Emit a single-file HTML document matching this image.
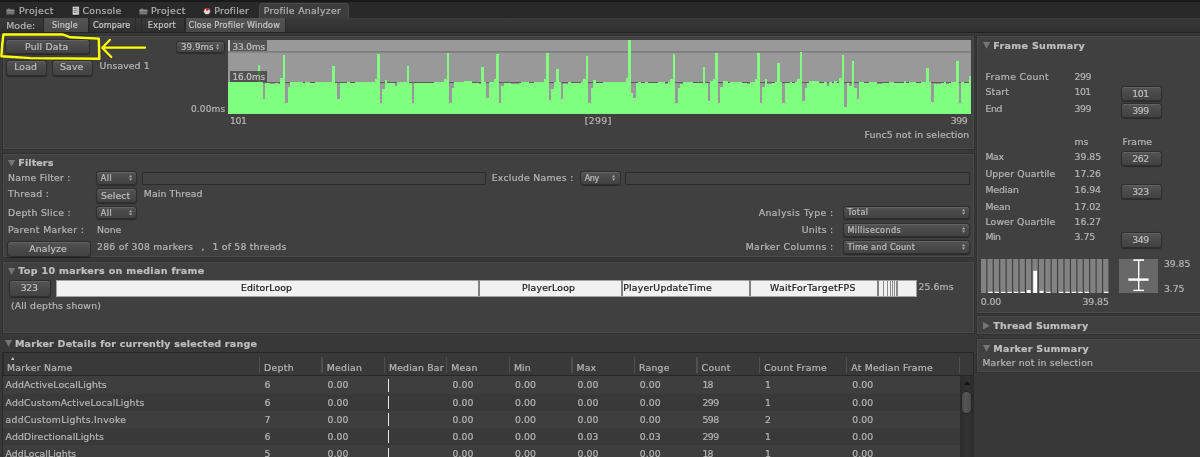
<!DOCTYPE html>
<html lang="en"><head><meta charset="utf-8"><title>Profile Analyzer</title><style>
html,body{margin:0;padding:0}
body{width:1200px;height:457px;overflow:hidden;background:#383838;position:relative;font-family:"DejaVu Sans","Liberation Sans",sans-serif;font-size:9.3px;color:#b4b4b4}
.abs{position:absolute;display:block}
.t{filter:grayscale(1);-webkit-text-stroke:0.22px;white-space:nowrap;line-height:12px;height:12px;color:#b4b4b4}
.t.b{font-weight:bold;color:#bebebe}
.t.tab{color:#b0b0b0}
.t.bt{color:#bdbdbd}
.box{background:#404040;border:1px solid #4a4a4a;box-sizing:border-box;box-shadow:0 0 0 0.7px #2f2f2f}
.tf{background:#434343;border:1px solid #2b2b2b;box-sizing:border-box;border-radius:1px}
.btn{box-sizing:border-box;border:1px solid #2e2e2e;border-radius:3.2px;background:linear-gradient(#545454,#4a4a4a 45%,#424242);box-shadow:inset 0 1px 0 #626262,0 0.6px 0.8px rgba(0,0,0,.35)}
.tb{box-sizing:border-box;border-left:1px solid #2a2a2a;border-right:1px solid #2a2a2a;background:linear-gradient(#3a3a3a,#2f2f2f)}
.tb.on{background:linear-gradient(#535353,#494949)}
.gl{background:rgba(38,38,38,0.62)}
.seg{box-sizing:border-box;background:#f1f1f1;border:1px solid #b4b4b4;border-top-color:#fafafa}
</style></head><body>
<div class="abs" style="left:0;top:0;width:1200px;height:18px;background:#292929"></div>
<div class="abs" style="left:0;top:0;width:1200px;height:1.6px;background:#191919"></div>
<div class="abs" style="left:259px;top:3.4px;width:90px;height:15px;background:#3d3d3d;border-radius:3.5px 3.5px 0 0;border:1px solid #4a4a4a;border-bottom:none;box-sizing:border-box"></div>
<svg class="abs" style="left:6.30px;top:7.90px" width="9" height="7" viewBox="0 0 9 7"><path d="M0.4 1.5H1.3L1.9 0.5H4L4.6 1.5H8.4V6.5H0.4Z" fill="#747474"/><path d="M0.4 2.4H8.4" stroke="#989898" stroke-width="0.9"/></svg>
<div class="abs t tab" style="top:5px;font-size:9.3px;letter-spacing:0.431px;left:19.00px;">Project</div>
<svg class="abs" style="left:71.5px;top:6.4px" width="8" height="10" viewBox="0 0 8 10"><rect x="0.3" y="0.3" width="7" height="8.8" rx="0.8" fill="#dedede" stroke="#111" stroke-width="0.6"/><path d="M1.6 2.3H4.6M1.6 4.3H4.6M1.6 6.3H4.6" stroke="#555" stroke-width="0.9"/><path d="M5.4 1.4V7.8" stroke="#999" stroke-width="0.7"/></svg>
<div class="abs t tab" style="top:5px;font-size:9.3px;letter-spacing:0.285px;left:82.60px;">Console</div>
<svg class="abs" style="left:138.90px;top:7.90px" width="9" height="7" viewBox="0 0 9 7"><path d="M0.4 1.5H1.3L1.9 0.5H4L4.6 1.5H8.4V6.5H0.4Z" fill="#747474"/><path d="M0.4 2.4H8.4" stroke="#989898" stroke-width="0.9"/></svg>
<div class="abs t tab" style="top:5px;font-size:9.3px;letter-spacing:0.431px;left:151.00px;">Project</div>
<svg class="abs" style="left:202.5px;top:7.2px" width="8" height="8" viewBox="0 0 8 8"><circle cx="4" cy="4.3" r="3.4" fill="#dcdcdc" stroke="#3a1010" stroke-width="0.6"/><path d="M4 4.3L2.3 1.5A3.3 3.3 0 0 1 6.4 2Z" fill="#e01818"/></svg>
<div class="abs t tab" style="top:5px;font-size:9.3px;letter-spacing:0.264px;left:214.30px;">Profiler</div>
<div class="abs t tab" style="top:5px;font-size:9.3px;letter-spacing:0.311px;left:263.80px;">Profile Analyzer</div>
<div class="abs" style="left:0;top:18px;width:1200px;height:14px;background:linear-gradient(#3a3a3a,#2f2f2f)"></div>
<div class="abs" style="left:0;top:32px;width:1200px;height:1.2px;background:#232323"></div>
<div class="abs t" style="top:20px;font-size:9.3px;letter-spacing:0.137px;left:6.20px;">Mode:</div>
<div class="abs tb on" style="left:42.50px;top:18px;width:46.80px;height:14px"></div>
<div class="abs t bt" style="left:41.50px;width:46.80px;top:19px;font-size:8.1px;letter-spacing:0.182px;text-indent:0.182px;text-align:center;color:#c6c6c6">Single</div>
<div class="abs tb" style="left:89.30px;top:18px;width:46.70px;height:14px"></div>
<div class="abs t bt" style="left:88.30px;width:46.70px;top:19px;font-size:8.1px;letter-spacing:0.094px;text-indent:0.094px;text-align:center;color:#c6c6c6">Compare</div>
<div class="abs tb" style="left:141.00px;top:18px;width:43.50px;height:14px"></div>
<div class="abs t bt" style="left:140.00px;width:43.50px;top:19px;font-size:8.1px;letter-spacing:0.300px;text-indent:0.300px;text-align:center;color:#c6c6c6">Export</div>
<div class="abs tb on" style="left:184.80px;top:18px;width:100.90px;height:14px"></div>
<div class="abs t bt" style="left:183.80px;width:100.90px;top:19px;font-size:8.1px;letter-spacing:0.183px;text-indent:0.183px;text-align:center;color:#c6c6c6">Close Profiler Window</div>
<div class="abs box" style="left:2.60px;top:35.80px;width:971.60px;height:113.40px"></div>
<div class="abs box" style="left:2.60px;top:153.60px;width:971.60px;height:103.80px"></div>
<div class="abs box" style="left:2.60px;top:261.60px;width:971.60px;height:71.60px"></div>
<div class="abs box" style="left:977.40px;top:36.20px;width:225.60px;height:276.70px"></div>
<div class="abs box" style="left:977.40px;top:316.40px;width:225.60px;height:18.00px"></div>
<div class="abs box" style="left:977.40px;top:338.80px;width:225.60px;height:33.60px"></div>
<div class="abs btn" style="left:5.40px;top:39.10px;width:84.50px;height:15.30px"></div>
<div class="abs t bt" style="left:4.40px;width:84.50px;top:41px;font-size:9.3px;letter-spacing:0.205px;text-indent:0.205px;text-align:center">Pull Data</div>
<div class="abs btn" style="left:5.60px;top:59.90px;width:41.90px;height:15.90px"></div>
<div class="abs t bt" style="left:4.60px;width:41.90px;top:61px;font-size:9.3px;letter-spacing:0.096px;text-indent:0.096px;text-align:center">Load</div>
<div class="abs btn" style="left:51.80px;top:59.90px;width:41.70px;height:15.90px"></div>
<div class="abs t bt" style="left:50.80px;width:41.70px;top:61px;font-size:9.3px;letter-spacing:0.191px;text-indent:0.191px;text-align:center">Save</div>
<div class="abs t" style="top:60px;font-size:9.3px;letter-spacing:0.094px;left:99.60px;">Unsaved 1</div>
<div class="abs btn" style="left:176.10px;top:40.60px;width:48.90px;height:12.80px"><svg class="abs" style="right:4.40px;top:2.20px" width="3.2" height="5.8" viewBox="0 0 3.4 6.2"><path d="M0 2.4L1.7 0L3.4 2.4ZM0 3.8L1.7 6.2L3.4 3.8Z" fill="#acacac"/></svg></div>
<div class="abs t bt" style="left:181.00px;top:41px;font-size:8.6px;letter-spacing:0.080px">39.9ms</div>
<svg class="abs" style="left:228px;top:40px" width="743" height="74" viewBox="0 0 743 74"><rect width="743" height="74" fill="#999"/><rect y="11.4" width="743" height="1.1" fill="#707070"/><rect y="42.00" width="743" height="1.1" fill="#5d5d5d"/><g fill="#80ff80" shape-rendering="crispEdges"><rect x="0.00" y="41.90" width="29.87" height="32.10"/><rect x="29.82" y="25.00" width="2.53" height="49.00"/><rect x="32.30" y="41.90" width="2.53" height="32.10"/><rect x="34.79" y="58.70" width="2.53" height="15.30"/><rect x="37.27" y="43.00" width="5.02" height="31.00"/><rect x="42.24" y="43.80" width="5.02" height="30.20"/><rect x="47.21" y="43.00" width="2.53" height="31.00"/><rect x="49.70" y="43.80" width="2.53" height="30.20"/><rect x="52.18" y="38.00" width="2.53" height="36.00"/><rect x="54.67" y="14.90" width="2.53" height="59.10"/><rect x="57.15" y="62.50" width="2.53" height="11.50"/><rect x="59.64" y="47.00" width="2.53" height="27.00"/><rect x="62.12" y="41.90" width="12.47" height="32.10"/><rect x="74.55" y="43.00" width="2.53" height="31.00"/><rect x="77.03" y="41.90" width="5.02" height="32.10"/><rect x="82.00" y="43.00" width="5.02" height="31.00"/><rect x="86.97" y="41.90" width="17.44" height="32.10"/><rect x="104.37" y="26.00" width="2.53" height="48.00"/><rect x="106.85" y="43.00" width="2.53" height="31.00"/><rect x="109.34" y="58.70" width="2.53" height="15.30"/><rect x="111.82" y="43.00" width="7.50" height="31.00"/><rect x="119.28" y="41.90" width="2.53" height="32.10"/><rect x="121.76" y="43.00" width="5.02" height="31.00"/><rect x="126.73" y="41.90" width="19.93" height="32.10"/><rect x="146.61" y="39.00" width="2.53" height="35.00"/><rect x="149.10" y="14.00" width="2.53" height="60.00"/><rect x="151.58" y="62.50" width="2.53" height="11.50"/><rect x="154.07" y="49.00" width="2.53" height="25.00"/><rect x="156.55" y="39.80" width="2.53" height="34.20"/><rect x="159.04" y="43.00" width="7.50" height="31.00"/><rect x="166.49" y="46.00" width="2.53" height="28.00"/><rect x="168.98" y="41.90" width="9.99" height="32.10"/><rect x="178.92" y="26.00" width="2.53" height="48.00"/><rect x="181.40" y="43.00" width="2.53" height="31.00"/><rect x="183.89" y="62.50" width="2.53" height="11.50"/><rect x="186.37" y="43.00" width="19.93" height="31.00"/><rect x="206.25" y="41.90" width="9.99" height="32.10"/><rect x="216.19" y="39.00" width="2.53" height="35.00"/><rect x="218.68" y="13.20" width="2.53" height="60.80"/><rect x="221.16" y="62.50" width="2.53" height="11.50"/><rect x="223.65" y="48.00" width="2.53" height="26.00"/><rect x="226.13" y="41.90" width="9.99" height="32.10"/><rect x="236.07" y="41.00" width="7.50" height="33.00"/><rect x="243.53" y="43.00" width="7.50" height="31.00"/><rect x="250.98" y="43.80" width="2.53" height="30.20"/><rect x="253.46" y="27.20" width="2.53" height="46.80"/><rect x="255.95" y="41.90" width="2.53" height="32.10"/><rect x="258.43" y="57.60" width="2.53" height="16.40"/><rect x="260.92" y="41.90" width="5.02" height="32.10"/><rect x="265.89" y="39.00" width="2.53" height="35.00"/><rect x="268.37" y="14.00" width="2.53" height="60.00"/><rect x="270.86" y="63.40" width="2.53" height="10.60"/><rect x="273.34" y="46.00" width="2.53" height="28.00"/><rect x="275.83" y="43.00" width="7.50" height="31.00"/><rect x="283.28" y="43.80" width="7.50" height="30.20"/><rect x="290.74" y="43.00" width="2.53" height="31.00"/><rect x="293.22" y="41.90" width="7.50" height="32.10"/><rect x="300.68" y="43.00" width="5.02" height="31.00"/><rect x="305.65" y="41.90" width="9.99" height="32.10"/><rect x="315.59" y="39.00" width="2.53" height="35.00"/><rect x="318.07" y="13.20" width="2.53" height="60.80"/><rect x="320.56" y="59.90" width="2.53" height="14.10"/><rect x="323.04" y="49.40" width="2.53" height="24.60"/><rect x="325.53" y="41.90" width="2.53" height="32.10"/><rect x="328.01" y="28.70" width="2.53" height="45.30"/><rect x="330.50" y="41.90" width="2.53" height="32.10"/><rect x="332.98" y="58.70" width="2.53" height="15.30"/><rect x="335.47" y="43.80" width="5.02" height="30.20"/><rect x="340.44" y="41.90" width="2.53" height="32.10"/><rect x="342.92" y="43.00" width="9.99" height="31.00"/><rect x="352.86" y="41.90" width="2.53" height="32.10"/><rect x="355.35" y="39.00" width="2.53" height="35.00"/><rect x="357.83" y="15.80" width="2.53" height="58.20"/><rect x="360.32" y="63.40" width="2.53" height="10.60"/><rect x="362.80" y="48.00" width="2.53" height="26.00"/><rect x="365.29" y="39.80" width="2.53" height="34.20"/><rect x="367.77" y="43.00" width="7.50" height="31.00"/><rect x="375.23" y="41.90" width="22.41" height="32.10"/><rect x="397.59" y="38.00" width="2.53" height="36.00"/><rect x="400.08" y="0.20" width="2.53" height="73.80"/><rect x="402.56" y="53.00" width="2.53" height="21.00"/><rect x="405.05" y="57.60" width="2.53" height="16.40"/><rect x="407.53" y="43.00" width="2.53" height="31.00"/><rect x="410.02" y="41.90" width="2.53" height="32.10"/><rect x="412.50" y="43.00" width="5.02" height="31.00"/><rect x="417.47" y="41.90" width="2.53" height="32.10"/><rect x="419.96" y="43.00" width="9.99" height="31.00"/><rect x="429.90" y="41.90" width="7.50" height="32.10"/><rect x="437.35" y="43.80" width="2.53" height="30.20"/><rect x="439.84" y="41.90" width="2.53" height="32.10"/><rect x="442.32" y="39.40" width="2.53" height="34.60"/><rect x="444.81" y="14.00" width="2.53" height="60.00"/><rect x="447.29" y="62.50" width="2.53" height="11.50"/><rect x="449.78" y="48.00" width="2.53" height="26.00"/><rect x="452.26" y="43.80" width="2.53" height="30.20"/><rect x="454.75" y="41.90" width="9.99" height="32.10"/><rect x="464.69" y="43.00" width="9.99" height="31.00"/><rect x="474.63" y="27.20" width="2.53" height="46.80"/><rect x="477.11" y="43.00" width="2.53" height="31.00"/><rect x="479.60" y="60.80" width="2.53" height="13.20"/><rect x="482.08" y="41.00" width="2.53" height="33.00"/><rect x="484.57" y="39.00" width="2.53" height="35.00"/><rect x="487.05" y="13.20" width="2.53" height="60.80"/><rect x="489.54" y="62.50" width="2.53" height="11.50"/><rect x="492.02" y="47.00" width="2.53" height="27.00"/><rect x="494.51" y="41.00" width="5.02" height="33.00"/><rect x="499.47" y="43.00" width="2.53" height="31.00"/><rect x="501.96" y="41.90" width="12.47" height="32.10"/><rect x="514.38" y="43.00" width="5.02" height="31.00"/><rect x="519.35" y="43.80" width="2.53" height="30.20"/><rect x="521.84" y="41.90" width="5.02" height="32.10"/><rect x="526.81" y="39.40" width="2.53" height="34.60"/><rect x="529.29" y="13.20" width="2.53" height="60.80"/><rect x="531.78" y="62.50" width="2.53" height="11.50"/><rect x="534.26" y="47.00" width="2.53" height="27.00"/><rect x="536.75" y="39.00" width="2.53" height="35.00"/><rect x="539.23" y="43.80" width="5.02" height="30.20"/><rect x="544.20" y="43.00" width="2.53" height="31.00"/><rect x="546.69" y="41.90" width="2.53" height="32.10"/><rect x="549.17" y="23.10" width="2.53" height="50.90"/><rect x="551.66" y="41.90" width="2.53" height="32.10"/><rect x="554.14" y="62.50" width="2.53" height="11.50"/><rect x="556.63" y="43.00" width="5.02" height="31.00"/><rect x="561.60" y="41.90" width="2.53" height="32.10"/><rect x="564.08" y="43.00" width="2.53" height="31.00"/><rect x="566.57" y="41.90" width="2.53" height="32.10"/><rect x="569.05" y="39.00" width="2.53" height="35.00"/><rect x="571.54" y="12.30" width="2.53" height="61.70"/><rect x="574.02" y="60.80" width="2.53" height="13.20"/><rect x="576.51" y="47.50" width="2.53" height="26.50"/><rect x="578.99" y="43.00" width="2.53" height="31.00"/><rect x="581.48" y="40.50" width="2.53" height="33.50"/><rect x="583.96" y="41.00" width="7.50" height="33.00"/><rect x="591.42" y="43.00" width="5.02" height="31.00"/><rect x="596.39" y="41.90" width="2.53" height="32.10"/><rect x="598.87" y="46.30" width="2.53" height="27.70"/><rect x="601.36" y="41.90" width="2.53" height="32.10"/><rect x="603.84" y="43.00" width="2.53" height="31.00"/><rect x="606.33" y="41.00" width="2.53" height="33.00"/><rect x="608.81" y="43.00" width="2.53" height="31.00"/><rect x="611.30" y="38.00" width="2.53" height="36.00"/><rect x="613.78" y="14.90" width="2.53" height="59.10"/><rect x="616.27" y="66.60" width="2.53" height="7.40"/><rect x="618.75" y="43.00" width="2.53" height="31.00"/><rect x="621.24" y="46.30" width="2.53" height="27.70"/><rect x="623.72" y="21.00" width="2.53" height="53.00"/><rect x="626.21" y="48.00" width="2.53" height="26.00"/><rect x="628.69" y="59.00" width="2.53" height="15.00"/><rect x="631.18" y="41.90" width="5.02" height="32.10"/><rect x="636.15" y="43.00" width="5.02" height="31.00"/><rect x="641.12" y="41.90" width="7.50" height="32.10"/><rect x="648.57" y="43.80" width="5.02" height="30.20"/><rect x="653.54" y="43.00" width="7.50" height="31.00"/><rect x="661.00" y="41.90" width="5.02" height="32.10"/><rect x="665.97" y="43.00" width="9.99" height="31.00"/><rect x="675.91" y="41.00" width="2.53" height="33.00"/><rect x="678.39" y="43.00" width="2.53" height="31.00"/><rect x="680.88" y="41.90" width="7.50" height="32.10"/><rect x="688.33" y="43.00" width="5.02" height="31.00"/><rect x="693.30" y="41.90" width="5.02" height="32.10"/><rect x="698.27" y="27.90" width="2.53" height="46.10"/><rect x="700.76" y="41.90" width="2.53" height="32.10"/><rect x="703.24" y="61.70" width="2.53" height="12.30"/><rect x="705.73" y="43.80" width="7.50" height="30.20"/><rect x="713.18" y="43.00" width="2.53" height="31.00"/><rect x="715.67" y="41.90" width="2.53" height="32.10"/><rect x="718.15" y="43.80" width="2.53" height="30.20"/><rect x="720.64" y="43.00" width="2.53" height="31.00"/><rect x="723.12" y="41.90" width="5.02" height="32.10"/><rect x="728.09" y="21.00" width="2.53" height="53.00"/><rect x="730.58" y="63.40" width="2.53" height="10.60"/><rect x="733.06" y="41.90" width="2.53" height="32.10"/><rect x="735.55" y="43.00" width="5.02" height="31.00"/><rect x="740.52" y="36.30" width="2.53" height="37.70"/></g></svg>
<div class="abs" style="left:228px;top:40px;width:1.6px;height:11.4px;background:#c8c8c8"></div>
<div class="abs gl" style="left:230px;top:40px;width:36.7px;height:11.4px"></div>
<div class="abs gl" style="left:230px;top:71.3px;width:36.7px;height:10.6px"></div>
<div class="abs t" style="top:41px;font-size:8.8px;letter-spacing:-0.044px;left:232.50px;color:#c2c2c2">33.0ms</div>
<div class="abs t" style="top:71px;font-size:8.8px;letter-spacing:-0.044px;left:232.50px;color:#c2c2c2">16.0ms</div>
<div class="abs t" style="top:103px;font-size:9px;letter-spacing:0.146px;right:974.65px;">0.00ms</div>
<div class="abs t" style="top:115px;font-size:9.3px;letter-spacing:-0.383px;left:230.00px;">101</div>
<div class="abs t" style="top:115px;font-size:9.3px;letter-spacing:0.421px;left:548.00px;width:100.00px;text-align:center;text-indent:0.421px;">[299]</div>
<div class="abs t" style="top:115px;font-size:9.3px;letter-spacing:-0.483px;right:232.88px;">399</div>
<div class="abs t" style="top:129px;font-size:9.3px;letter-spacing:0.131px;right:230.67px;">Func5 not in selection</div>
<svg class="abs" style="left:0;top:28px" width="160" height="40" viewBox="0 28 160 40" fill="none" stroke="#ffff00" stroke-linejoin="round" stroke-linecap="round"><path stroke-width="2.4" d="M3.4 34.4L63 34.5L70.5 37.3L98.8 38.6L99.3 58.7L30.7 58.1L1.4 56.2L2.2 45Z"/><path stroke-width="2.2" d="M102.3 47.7H145M110 39.8L102.3 47.7L111.3 57"/></svg>
<svg class="abs" style="left:8.20px;top:159.70px" width="7.2" height="6.8" viewBox="0 0 7.2 6.8"><path d="M0 0H7.2L3.6 6.8Z" fill="#757575"/></svg>
<div class="abs t b" style="top:157px;font-size:9.5px;letter-spacing:0.115px;left:18.30px;">Filters</div>
<div class="abs t" style="top:172px;font-size:9.3px;letter-spacing:0.251px;left:8.00px;">Name Filter :</div>
<div class="abs btn" style="left:95.80px;top:171.40px;width:41.50px;height:13.20px"><svg class="abs" style="right:4.40px;top:2.40px" width="3.2" height="5.8" viewBox="0 0 3.4 6.2"><path d="M0 2.4L1.7 0L3.4 2.4ZM0 3.8L1.7 6.2L3.4 3.8Z" fill="#acacac"/></svg></div>
<div class="abs t bt" style="left:100.70px;top:172px;font-size:8.1px;letter-spacing:0.484px">All</div>
<div class="abs tf" style="left:141.50px;top:171.50px;width:344.50px;height:13.00px"></div>
<div class="abs t" style="top:172px;font-size:9.3px;letter-spacing:0.276px;left:491.70px;">Exclude Names :</div>
<div class="abs btn" style="left:579.80px;top:171.40px;width:41.20px;height:13.20px"><svg class="abs" style="right:4.40px;top:2.40px" width="3.2" height="5.8" viewBox="0 0 3.4 6.2"><path d="M0 2.4L1.7 0L3.4 2.4ZM0 3.8L1.7 6.2L3.4 3.8Z" fill="#acacac"/></svg></div>
<div class="abs t bt" style="left:584.70px;top:172px;font-size:8.1px;letter-spacing:-0.427px">Any</div>
<div class="abs tf" style="left:625.30px;top:171.50px;width:345.00px;height:13.00px"></div>
<div class="abs t" style="top:188px;font-size:9.3px;letter-spacing:0.315px;left:8.00px;">Thread :</div>
<div class="abs btn" style="left:95.80px;top:188.10px;width:41.50px;height:15.20px"></div>
<div class="abs t bt" style="left:94.80px;width:41.50px;top:190px;font-size:9.3px;letter-spacing:0.106px;text-indent:0.106px;text-align:center">Select</div>
<div class="abs t" style="top:188px;font-size:9.3px;letter-spacing:0.104px;left:143.80px;">Main Thread</div>
<div class="abs t" style="top:207px;font-size:9.3px;letter-spacing:0.272px;left:8.00px;">Depth Slice :</div>
<div class="abs btn" style="left:95.80px;top:206.30px;width:41.50px;height:13.10px"><svg class="abs" style="right:4.40px;top:2.35px" width="3.2" height="5.8" viewBox="0 0 3.4 6.2"><path d="M0 2.4L1.7 0L3.4 2.4ZM0 3.8L1.7 6.2L3.4 3.8Z" fill="#acacac"/></svg></div>
<div class="abs t bt" style="left:100.70px;top:207px;font-size:8.1px;letter-spacing:0.484px">All</div>
<div class="abs t" style="top:224px;font-size:9.3px;letter-spacing:0.346px;left:8.00px;">Parent Marker :</div>
<div class="abs t" style="top:224px;font-size:9.3px;letter-spacing:0.017px;left:97.00px;">None</div>
<div class="abs btn" style="left:6.80px;top:241.40px;width:84.50px;height:15.30px"></div>
<div class="abs t bt" style="left:5.80px;width:84.50px;top:243px;font-size:9.3px;letter-spacing:0.146px;text-indent:0.146px;text-align:center">Analyze</div>
<div class="abs t" style="top:241px;font-size:9.3px;letter-spacing:0.271px;left:97.00px;">286 of 308 markers</div>
<div class="abs t" style="top:241px;font-size:9.3px;letter-spacing:0.200px;left:201.40px;">,</div>
<div class="abs t" style="top:241px;font-size:9.3px;letter-spacing:0.207px;left:212.50px;">1 of 58 threads</div>
<div class="abs t" style="top:207px;font-size:9.3px;letter-spacing:0.409px;right:366.39px;">Analysis Type :</div>
<div class="abs t" style="top:224px;font-size:9.3px;letter-spacing:0.276px;right:366.52px;">Units :</div>
<div class="abs t" style="top:241px;font-size:9.3px;letter-spacing:0.392px;right:366.41px;">Marker Columns :</div>
<div class="abs btn" style="left:842.60px;top:205.80px;width:127.50px;height:13.60px"><svg class="abs" style="right:4.40px;top:2.60px" width="3.2" height="5.8" viewBox="0 0 3.4 6.2"><path d="M0 2.4L1.7 0L3.4 2.4ZM0 3.8L1.7 6.2L3.4 3.8Z" fill="#acacac"/></svg></div>
<div class="abs t bt" style="left:847.50px;top:206px;font-size:8.1px;letter-spacing:0.427px">Total</div>
<div class="abs btn" style="left:842.60px;top:223.30px;width:127.50px;height:13.40px"><svg class="abs" style="right:4.40px;top:2.50px" width="3.2" height="5.8" viewBox="0 0 3.4 6.2"><path d="M0 2.4L1.7 0L3.4 2.4ZM0 3.8L1.7 6.2L3.4 3.8Z" fill="#acacac"/></svg></div>
<div class="abs t bt" style="left:847.50px;top:224px;font-size:8.1px;letter-spacing:0.375px">Milliseconds</div>
<div class="abs btn" style="left:842.60px;top:240.40px;width:127.50px;height:13.40px"><svg class="abs" style="right:4.40px;top:2.50px" width="3.2" height="5.8" viewBox="0 0 3.4 6.2"><path d="M0 2.4L1.7 0L3.4 2.4ZM0 3.8L1.7 6.2L3.4 3.8Z" fill="#acacac"/></svg></div>
<div class="abs t bt" style="left:847.50px;top:241px;font-size:8.1px;letter-spacing:0.245px">Time and Count</div>
<svg class="abs" style="left:8.20px;top:268.00px" width="7.2" height="6.8" viewBox="0 0 7.2 6.8"><path d="M0 0H7.2L3.6 6.8Z" fill="#757575"/></svg>
<div class="abs t b" style="top:265px;font-size:9.5px;letter-spacing:0.324px;left:18.30px;">Top 10 markers on median frame</div>
<div class="abs btn" style="left:9.40px;top:280.30px;width:41.70px;height:16.80px"></div>
<div class="abs t bt" style="left:8.40px;width:41.70px;top:282px;font-size:9.3px;letter-spacing:-0.283px;text-indent:-0.283px;text-align:center">323</div>
<div class="abs" style="left:55.7px;top:279.50px;width:861.10px;height:17.40px;background:#f1f1f1;border:1.5px solid #a2a2a2;border-left-width:1px;border-right-width:1px;box-sizing:border-box"></div>
<div class="abs" style="left:477.95px;top:280.10px;width:1.7px;height:16.20px;background:#828282"></div>
<div class="abs" style="left:620.95px;top:280.10px;width:1.7px;height:16.20px;background:#828282"></div>
<div class="abs" style="left:749.05px;top:280.10px;width:1.7px;height:16.20px;background:#828282"></div>
<div class="abs" style="left:876.95px;top:280.10px;width:1.7px;height:16.20px;background:#828282"></div>
<div class="abs" style="left:883.15px;top:280.50px;width:0.9px;height:15.40px;background:#8a8a8a"></div>
<div class="abs" style="left:886.95px;top:280.50px;width:0.9px;height:15.40px;background:#8a8a8a"></div>
<div class="abs" style="left:889.95px;top:280.50px;width:0.9px;height:15.40px;background:#8a8a8a"></div>
<div class="abs" style="left:892.15px;top:280.50px;width:0.9px;height:15.40px;background:#8a8a8a"></div>
<div class="abs" style="left:893.95px;top:280.50px;width:0.9px;height:15.40px;background:#8a8a8a"></div>
<div class="abs" style="left:895.55px;top:280.50px;width:0.9px;height:15.40px;background:#8a8a8a"></div>
<div class="abs" style="left:897.15px;top:280.50px;width:0.9px;height:15.40px;background:#8a8a8a"></div>
<div class="abs t" style="top:282px;font-size:9.3px;letter-spacing:0.132px;left:241.00px;color:#1a1a1a">EditorLoop</div>
<div class="abs t" style="top:282px;font-size:9.3px;letter-spacing:0.196px;left:522.00px;color:#1a1a1a">PlayerLoop</div>
<div class="abs t" style="top:282px;font-size:9.3px;letter-spacing:0.208px;left:623.20px;color:#1a1a1a">PlayerUpdateTime</div>
<div class="abs t" style="top:282px;font-size:9.3px;letter-spacing:0.314px;left:770.00px;color:#1a1a1a">WaitForTargetFPS</div>
<div class="abs t" style="top:281px;font-size:9.3px;letter-spacing:0.075px;left:918.60px;">25.6ms</div>
<div class="abs t" style="top:300px;font-size:9.3px;letter-spacing:0.206px;left:10.90px;">(All depths shown)</div>
<svg class="abs" style="left:4.90px;top:340.40px" width="7.2" height="6.8" viewBox="0 0 7.2 6.8"><path d="M0 0H7.2L3.6 6.8Z" fill="#757575"/></svg>
<div class="abs t b" style="top:338px;font-size:9.5px;letter-spacing:0.230px;left:14.90px;">Marker Details for currently selected range</div>
<div class="abs" style="left:3.00px;top:352px;width:970.80px;height:24px;background:#393939;border-top:1.2px solid #272727;box-sizing:border-box"></div>
<div class="abs" style="left:3.00px;top:375.2px;width:970.80px;height:1.2px;background:#272727"></div>
<div class="abs" style="left:2.40px;top:352px;width:1.2px;height:105px;background:#2a2a2a"></div>
<div class="abs" style="left:973.20px;top:352px;width:1.2px;height:105px;background:#2a2a2a"></div>
<div class="abs" style="left:259.00px;top:356.6px;width:1.3px;height:16.2px;background:#4f4f4f"></div>
<div class="abs" style="left:321.30px;top:356.6px;width:1.3px;height:16.2px;background:#4f4f4f"></div>
<div class="abs" style="left:383.70px;top:356.6px;width:1.3px;height:16.2px;background:#4f4f4f"></div>
<div class="abs" style="left:446.10px;top:356.6px;width:1.3px;height:16.2px;background:#4f4f4f"></div>
<div class="abs" style="left:509.00px;top:356.6px;width:1.3px;height:16.2px;background:#4f4f4f"></div>
<div class="abs" style="left:571.30px;top:356.6px;width:1.3px;height:16.2px;background:#4f4f4f"></div>
<div class="abs" style="left:633.70px;top:356.6px;width:1.3px;height:16.2px;background:#4f4f4f"></div>
<div class="abs" style="left:696.30px;top:356.6px;width:1.3px;height:16.2px;background:#4f4f4f"></div>
<div class="abs" style="left:758.90px;top:356.6px;width:1.3px;height:16.2px;background:#4f4f4f"></div>
<div class="abs" style="left:846.10px;top:356.6px;width:1.3px;height:16.2px;background:#4f4f4f"></div>
<div class="abs" style="left:958.70px;top:356.6px;width:1.3px;height:16.2px;background:#4f4f4f"></div>
<div class="abs t" style="top:362px;font-size:9.3px;letter-spacing:0.265px;left:7.00px;">Marker Name</div>
<div class="abs t" style="top:362px;font-size:9.3px;letter-spacing:0.322px;left:264.00px;">Depth</div>
<div class="abs t" style="top:362px;font-size:9.3px;letter-spacing:0.278px;left:326.70px;">Median</div>
<div class="abs t" style="top:362px;font-size:9.3px;letter-spacing:0.214px;left:388.90px;">Median Bar</div>
<div class="abs t" style="top:362px;font-size:9.3px;letter-spacing:0.224px;left:451.30px;">Mean</div>
<div class="abs t" style="top:362px;font-size:9.3px;letter-spacing:0.008px;left:514.10px;">Min</div>
<div class="abs t" style="top:362px;font-size:9.3px;letter-spacing:0.141px;left:576.50px;">Max</div>
<div class="abs t" style="top:362px;font-size:9.3px;letter-spacing:0.283px;left:638.90px;">Range</div>
<div class="abs t" style="top:362px;font-size:9.3px;letter-spacing:0.302px;left:701.60px;">Count</div>
<div class="abs t" style="top:362px;font-size:9.3px;letter-spacing:0.307px;left:764.20px;">Count Frame</div>
<div class="abs t" style="top:362px;font-size:9.3px;letter-spacing:0.204px;left:851.30px;">At Median Frame</div>
<svg class="abs" style="left:10.6px;top:357.4px" width="3.6" height="3" viewBox="0 0 3.6 3"><path d="M0 3L1.8 0L3.6 3Z" fill="#c8c8c8"/></svg>
<div class="abs" style="left:3.00px;top:376.30px;width:957.20px;height:17.32px;background:#3e3e3e"></div>
<div class="abs t" style="top:379px;font-size:9.3px;letter-spacing:0.106px;left:5.60px;">AddActiveLocalLights</div>
<div class="abs t" style="top:379px;font-size:9.3px;letter-spacing:-0.120px;left:264.50px;">6</div>
<div class="abs t" style="top:379px;font-size:9.3px;letter-spacing:0.094px;left:327.50px;">0.00</div>
<div class="abs t" style="top:379px;font-size:9.3px;letter-spacing:0.094px;left:452.40px;">0.00</div>
<div class="abs t" style="top:379px;font-size:9.3px;letter-spacing:0.094px;left:515.00px;">0.00</div>
<div class="abs t" style="top:379px;font-size:9.3px;letter-spacing:0.094px;left:577.40px;">0.00</div>
<div class="abs t" style="top:379px;font-size:9.3px;letter-spacing:0.094px;left:639.80px;">0.00</div>
<div class="abs t" style="top:379px;font-size:9.3px;letter-spacing:-0.844px;left:702.40px;">18</div>
<div class="abs t" style="top:379px;font-size:9.3px;letter-spacing:-0.120px;left:765.00px;">1</div>
<div class="abs t" style="top:379px;font-size:9.3px;letter-spacing:0.094px;left:852.20px;">0.00</div>
<div class="abs" style="left:388.2px;top:378.80px;width:1.2px;height:13px;background:#e6e6e6"></div>
<div class="abs" style="left:3.00px;top:393.52px;width:957.20px;height:17.32px;background:#393939"></div>
<div class="abs t" style="top:397px;font-size:9.3px;letter-spacing:0.168px;left:5.60px;">AddCustomActiveLocalLights</div>
<div class="abs t" style="top:397px;font-size:9.3px;letter-spacing:-0.120px;left:264.50px;">6</div>
<div class="abs t" style="top:397px;font-size:9.3px;letter-spacing:0.094px;left:327.50px;">0.00</div>
<div class="abs t" style="top:397px;font-size:9.3px;letter-spacing:0.094px;left:452.40px;">0.00</div>
<div class="abs t" style="top:397px;font-size:9.3px;letter-spacing:0.094px;left:515.00px;">0.00</div>
<div class="abs t" style="top:397px;font-size:9.3px;letter-spacing:0.094px;left:577.40px;">0.00</div>
<div class="abs t" style="top:397px;font-size:9.3px;letter-spacing:0.094px;left:639.80px;">0.00</div>
<div class="abs t" style="top:397px;font-size:9.3px;letter-spacing:-0.483px;left:702.40px;">299</div>
<div class="abs t" style="top:397px;font-size:9.3px;letter-spacing:-0.120px;left:765.00px;">1</div>
<div class="abs t" style="top:397px;font-size:9.3px;letter-spacing:0.094px;left:852.20px;">0.00</div>
<div class="abs" style="left:388.2px;top:396.02px;width:1.2px;height:13px;background:#e6e6e6"></div>
<div class="abs" style="left:3.00px;top:410.74px;width:957.20px;height:17.32px;background:#3e3e3e"></div>
<div class="abs t" style="top:414px;font-size:9.3px;letter-spacing:0.271px;left:5.60px;">addCustomLights.Invoke</div>
<div class="abs t" style="top:414px;font-size:9.3px;letter-spacing:-0.120px;left:264.50px;">7</div>
<div class="abs t" style="top:414px;font-size:9.3px;letter-spacing:0.094px;left:327.50px;">0.00</div>
<div class="abs t" style="top:414px;font-size:9.3px;letter-spacing:0.094px;left:452.40px;">0.00</div>
<div class="abs t" style="top:414px;font-size:9.3px;letter-spacing:0.094px;left:515.00px;">0.00</div>
<div class="abs t" style="top:414px;font-size:9.3px;letter-spacing:0.094px;left:577.40px;">0.00</div>
<div class="abs t" style="top:414px;font-size:9.3px;letter-spacing:0.094px;left:639.80px;">0.00</div>
<div class="abs t" style="top:414px;font-size:9.3px;letter-spacing:-0.483px;left:702.40px;">598</div>
<div class="abs t" style="top:414px;font-size:9.3px;letter-spacing:-0.120px;left:765.00px;">2</div>
<div class="abs t" style="top:414px;font-size:9.3px;letter-spacing:0.094px;left:852.20px;">0.00</div>
<div class="abs" style="left:388.2px;top:413.24px;width:1.2px;height:13px;background:#e6e6e6"></div>
<div class="abs" style="left:3.00px;top:427.96px;width:957.20px;height:17.32px;background:#393939"></div>
<div class="abs t" style="top:431px;font-size:9.3px;letter-spacing:0.105px;left:5.60px;">AddDirectionalLights</div>
<div class="abs t" style="top:431px;font-size:9.3px;letter-spacing:-0.120px;left:264.50px;">6</div>
<div class="abs t" style="top:431px;font-size:9.3px;letter-spacing:0.094px;left:327.50px;">0.00</div>
<div class="abs t" style="top:431px;font-size:9.3px;letter-spacing:0.094px;left:452.40px;">0.00</div>
<div class="abs t" style="top:431px;font-size:9.3px;letter-spacing:0.094px;left:515.00px;">0.00</div>
<div class="abs t" style="top:431px;font-size:9.3px;letter-spacing:0.094px;left:577.40px;">0.03</div>
<div class="abs t" style="top:431px;font-size:9.3px;letter-spacing:0.094px;left:639.80px;">0.03</div>
<div class="abs t" style="top:431px;font-size:9.3px;letter-spacing:-0.483px;left:702.40px;">299</div>
<div class="abs t" style="top:431px;font-size:9.3px;letter-spacing:-0.120px;left:765.00px;">1</div>
<div class="abs t" style="top:431px;font-size:9.3px;letter-spacing:0.094px;left:852.20px;">0.00</div>
<div class="abs" style="left:388.2px;top:430.46px;width:1.2px;height:13px;background:#e6e6e6"></div>
<div class="abs" style="left:3.00px;top:445.18px;width:957.20px;height:17.32px;background:#3e3e3e"></div>
<div class="abs t" style="top:448px;font-size:9.3px;letter-spacing:0.035px;left:5.60px;">AddLocalLights</div>
<div class="abs t" style="top:448px;font-size:9.3px;letter-spacing:-0.120px;left:264.50px;">5</div>
<div class="abs t" style="top:448px;font-size:9.3px;letter-spacing:0.094px;left:327.50px;">0.00</div>
<div class="abs t" style="top:448px;font-size:9.3px;letter-spacing:0.094px;left:452.40px;">0.00</div>
<div class="abs t" style="top:448px;font-size:9.3px;letter-spacing:0.094px;left:515.00px;">0.00</div>
<div class="abs t" style="top:448px;font-size:9.3px;letter-spacing:0.094px;left:577.40px;">0.00</div>
<div class="abs t" style="top:448px;font-size:9.3px;letter-spacing:0.094px;left:639.80px;">0.00</div>
<div class="abs t" style="top:448px;font-size:9.3px;letter-spacing:-0.844px;left:702.40px;">18</div>
<div class="abs t" style="top:448px;font-size:9.3px;letter-spacing:-0.120px;left:765.00px;">1</div>
<div class="abs t" style="top:448px;font-size:9.3px;letter-spacing:0.094px;left:852.20px;">0.00</div>
<div class="abs" style="left:388.2px;top:447.68px;width:1.2px;height:13px;background:#e6e6e6"></div>
<div class="abs" style="left:960.2px;top:375.8px;width:13.6px;height:82px;background:linear-gradient(90deg,#2b2b2b,#333 50%,#2b2b2b)"></div>
<svg class="abs" style="left:963.6px;top:380.6px" width="6" height="4" viewBox="0 0 6 4"><path d="M0 4L3 0L6 4Z" fill="#121212"/></svg>
<div class="abs" style="left:960.8px;top:390.8px;width:11px;height:23.6px;background:linear-gradient(90deg,#4b4b4b,#565656 40%,#494949);border-radius:5px;border:0.8px solid #262626;box-sizing:border-box"></div>
<svg class="abs" style="left:982.80px;top:42.20px" width="7.2" height="6.8" viewBox="0 0 7.2 6.8"><path d="M0 0H7.2L3.6 6.8Z" fill="#757575"/></svg>
<div class="abs t b" style="top:40px;font-size:9.5px;letter-spacing:0.348px;left:993.20px;">Frame Summary</div>
<div class="abs t" style="top:71px;font-size:9.3px;letter-spacing:0.377px;left:985.40px;">Frame Count</div>
<div class="abs t" style="top:71px;font-size:9.3px;letter-spacing:-0.483px;left:1074.60px;">299</div>
<div class="abs t" style="top:86px;font-size:9.3px;letter-spacing:0.220px;left:985.40px;">Start</div>
<div class="abs t" style="top:86px;font-size:9.3px;letter-spacing:-0.633px;left:1074.60px;">101</div>
<div class="abs t" style="top:103px;font-size:9.3px;letter-spacing:-0.286px;left:985.40px;">End</div>
<div class="abs t" style="top:103px;font-size:9.3px;letter-spacing:-0.483px;left:1074.60px;">399</div>
<div class="abs t" style="top:151px;font-size:9.3px;letter-spacing:-0.359px;left:985.40px;">Max</div>
<div class="abs t" style="top:151px;font-size:9.3px;letter-spacing:-0.010px;left:1074.60px;">39.85</div>
<div class="abs t" style="top:168px;font-size:9.3px;letter-spacing:0.117px;left:985.40px;">Upper Quartile</div>
<div class="abs t" style="top:168px;font-size:9.3px;letter-spacing:-0.060px;left:1074.60px;">17.26</div>
<div class="abs t" style="top:184px;font-size:9.3px;letter-spacing:-0.062px;left:985.40px;">Median</div>
<div class="abs t" style="top:184px;font-size:9.3px;letter-spacing:-0.060px;left:1074.60px;">16.94</div>
<div class="abs t" style="top:201px;font-size:9.3px;letter-spacing:-0.109px;left:985.40px;">Mean</div>
<div class="abs t" style="top:201px;font-size:9.3px;letter-spacing:-0.060px;left:1074.60px;">17.02</div>
<div class="abs t" style="top:216px;font-size:9.3px;letter-spacing:0.141px;left:985.40px;">Lower Quartile</div>
<div class="abs t" style="top:216px;font-size:9.3px;letter-spacing:-0.060px;left:1074.60px;">16.27</div>
<div class="abs t" style="top:231px;font-size:9.3px;letter-spacing:-0.442px;left:985.40px;">Min</div>
<div class="abs t" style="top:231px;font-size:9.3px;letter-spacing:-0.006px;left:1074.60px;">3.75</div>
<div class="abs t" style="top:136px;font-size:9.3px;letter-spacing:-0.106px;left:1074.60px;">ms</div>
<div class="abs t" style="top:136px;font-size:9.3px;letter-spacing:0.129px;left:1122.60px;">Frame</div>
<div class="abs btn" style="left:1121.00px;top:86.10px;width:41.30px;height:15.20px"></div>
<div class="abs t bt" style="left:1120.00px;width:41.30px;top:88px;font-size:9.3px;letter-spacing:-0.383px;text-indent:-0.383px;text-align:center">101</div>
<div class="abs btn" style="left:1121.00px;top:103.20px;width:41.30px;height:15.20px"></div>
<div class="abs t bt" style="left:1120.00px;width:41.30px;top:105px;font-size:9.3px;letter-spacing:-0.383px;text-indent:-0.383px;text-align:center">399</div>
<div class="abs btn" style="left:1121.00px;top:151.30px;width:41.30px;height:15.20px"></div>
<div class="abs t bt" style="left:1120.00px;width:41.30px;top:153px;font-size:9.3px;letter-spacing:-0.383px;text-indent:-0.383px;text-align:center">262</div>
<div class="abs btn" style="left:1121.00px;top:183.80px;width:41.30px;height:15.40px"></div>
<div class="abs t bt" style="left:1120.00px;width:41.30px;top:186px;font-size:9.3px;letter-spacing:-0.383px;text-indent:-0.383px;text-align:center">323</div>
<div class="abs btn" style="left:1121.00px;top:232.00px;width:41.30px;height:15.60px"></div>
<div class="abs t bt" style="left:1120.00px;width:41.30px;top:234px;font-size:9.3px;letter-spacing:-0.383px;text-indent:-0.383px;text-align:center">349</div>
<svg class="abs" style="left:980.8px;top:258.9px" width="128.6" height="34" viewBox="0 0 128.6 34"><rect x="0.00" y="0" width="5.23" height="34" fill="#828282"/><rect x="6.43" y="0" width="5.23" height="34" fill="#828282"/><rect x="7.33" y="32.80" width="4.33" height="1.20" fill="#fff"/><rect x="12.86" y="0" width="5.23" height="34" fill="#828282"/><rect x="13.76" y="32.80" width="4.33" height="1.20" fill="#fff"/><rect x="19.29" y="0" width="5.23" height="34" fill="#828282"/><rect x="20.19" y="32.80" width="4.33" height="1.20" fill="#fff"/><rect x="25.72" y="0" width="5.23" height="34" fill="#828282"/><rect x="26.62" y="32.80" width="4.33" height="1.20" fill="#fff"/><rect x="32.15" y="0" width="5.23" height="34" fill="#828282"/><rect x="33.05" y="32.80" width="4.33" height="1.20" fill="#fff"/><rect x="38.58" y="0" width="5.23" height="34" fill="#828282"/><rect x="39.48" y="32.80" width="4.33" height="1.20" fill="#fff"/><rect x="45.01" y="0" width="5.23" height="34" fill="#828282"/><rect x="45.81" y="31.00" width="3.83" height="3.00" fill="#fff"/><rect x="51.44" y="0" width="5.23" height="34" fill="#828282"/><rect x="52.24" y="11.80" width="3.83" height="22.20" fill="#fff"/><rect x="57.87" y="0" width="5.23" height="34" fill="#828282"/><rect x="58.67" y="31.80" width="3.83" height="2.20" fill="#fff"/><rect x="64.30" y="0" width="5.23" height="34" fill="#828282"/><rect x="65.20" y="32.80" width="4.33" height="1.20" fill="#fff"/><rect x="70.73" y="0" width="5.23" height="34" fill="#828282"/><rect x="77.16" y="0" width="5.23" height="34" fill="#828282"/><rect x="78.06" y="32.80" width="4.33" height="1.20" fill="#fff"/><rect x="83.59" y="0" width="5.23" height="34" fill="#828282"/><rect x="84.49" y="32.80" width="4.33" height="1.20" fill="#fff"/><rect x="90.02" y="0" width="5.23" height="34" fill="#828282"/><rect x="90.92" y="32.80" width="4.33" height="1.20" fill="#fff"/><rect x="96.45" y="0" width="5.23" height="34" fill="#828282"/><rect x="97.35" y="32.80" width="4.33" height="1.20" fill="#fff"/><rect x="102.88" y="0" width="5.23" height="34" fill="#828282"/><rect x="103.78" y="32.80" width="4.33" height="1.20" fill="#fff"/><rect x="109.31" y="0" width="5.23" height="34" fill="#828282"/><rect x="115.74" y="0" width="5.23" height="34" fill="#828282"/><rect x="122.17" y="0" width="5.23" height="34" fill="#828282"/><rect x="123.07" y="32.80" width="4.33" height="1.20" fill="#fff"/></svg>
<div class="abs" style="left:1118.7px;top:258.9px;width:39.4px;height:34px;background:#686868"></div>
<svg class="abs" style="left:1118.7px;top:258.9px" width="39.4" height="34" viewBox="0 0 39.4 34" stroke="#fff" fill="none"><path d="M19.7 0.6V31.9" stroke-width="1.4"/><path d="M14.4 1.1H25" stroke-width="1.6"/><path d="M14.4 31.4H25" stroke-width="1.4"/><path d="M9.3 20.6H29.6" stroke-width="2.4"/></svg>
<div class="abs t" style="top:258px;font-size:9.3px;letter-spacing:-0.060px;left:1164.00px;">39.85</div>
<div class="abs t" style="top:283px;font-size:9.3px;letter-spacing:-0.073px;left:1164.00px;">3.75</div>
<div class="abs t" style="top:296px;font-size:9.3px;letter-spacing:-0.106px;left:980.80px;">0.00</div>
<div class="abs t" style="top:296px;font-size:9.3px;letter-spacing:-0.060px;right:91.26px;">39.85</div>
<svg class="abs" style="left:983.00px;top:321.80px" width="7" height="7.6" viewBox="0 0 7 7.6"><path d="M0 0V7.6L6.9 3.8Z" fill="#757575"/></svg>
<div class="abs t b" style="top:320px;font-size:9.5px;letter-spacing:0.262px;left:993.20px;">Thread Summary</div>
<svg class="abs" style="left:982.80px;top:345.00px" width="7.2" height="6.8" viewBox="0 0 7.2 6.8"><path d="M0 0H7.2L3.6 6.8Z" fill="#757575"/></svg>
<div class="abs t b" style="top:343px;font-size:9.5px;letter-spacing:0.288px;left:993.20px;">Marker Summary</div>
<div class="abs t" style="top:357px;font-size:9.3px;letter-spacing:0.183px;left:982.40px;">Marker not in selection</div>
</body></html>
